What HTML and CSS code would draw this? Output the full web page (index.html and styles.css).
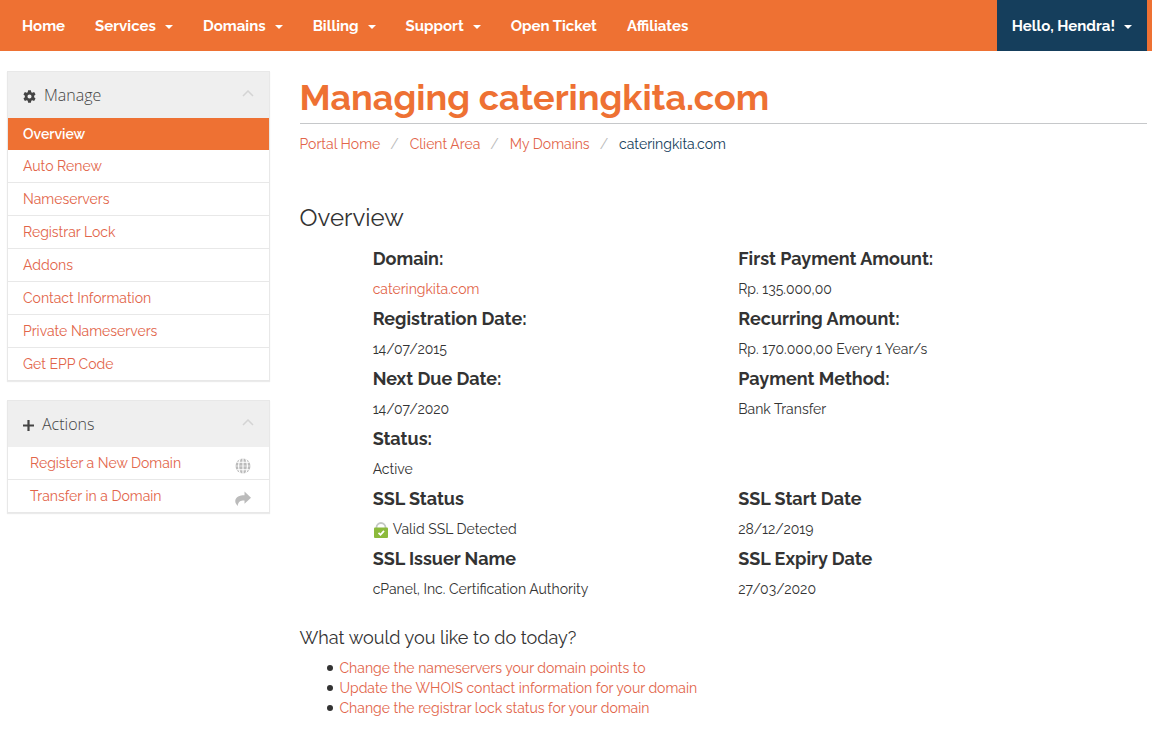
FILE: index.html
```
<!DOCTYPE html>
<html lang="en">
  <head>
    <meta charset="utf-8">
    <meta name="viewport" content="width=device-width, initial-scale=1">
    <title>Managing cateringkita.com</title>
    <link rel="stylesheet" href="styles.css">
  </head>
  <body>

    <!-- main menu -->
    <nav class="navbar">
      <a class="nav-item" href="#">Home</a>
      <button class="nav-item" type="button">Services <span class="caret"></span></button>
      <button class="nav-item" type="button">Domains <span class="caret"></span></button>
      <button class="nav-item" type="button">Billing <span class="caret"></span></button>
      <button class="nav-item" type="button">Support <span class="caret"></span></button>
      <a class="nav-item" href="#">Open Ticket</a>
      <a class="nav-item" href="#">Affiliates</a>
      <button class="nav-item account" type="button">Hello, Hendra! <span class="caret"></span></button>
    </nav>

    <div class="page">

      <!-- sidebar -->
      <aside class="sidebar">
        <section class="panel">
          <h3 class="panel-heading">
            <svg class="heading-icon" viewBox="0 0 14 14"><path fill="currentColor" fill-rule="evenodd" d="M5.500 .3h3l.4 2 1.100.6 2-.7 1.500 2.600-1.500 1.400v1.600l1.500 1.400-1.500 2.600-2-.7-1.100.6-.4 2h-3l-.4-2-1.100-.6-2 .7L.5 9.200 2 7.800V6.200L.5 4.800 2 2.200l2 .7 1.100-.6zM7 4.800a2.200 2.200 0 1 0 0 4.400 2.200 2.200 0 0 0 0-4.400z"/></svg>
            <span>Manage</span>
            <svg class="chevron" viewBox="0 0 12 7"><path fill="none" stroke="currentColor" stroke-width="1.500" d="M1 6l5-5 5 5"/></svg>
          </h3>
          <a class="list-item active" href="#">Overview</a>
          <a class="list-item" href="#">Auto Renew</a>
          <a class="list-item" href="#">Nameservers</a>
          <a class="list-item" href="#">Registrar Lock</a>
          <a class="list-item" href="#">Addons</a>
          <a class="list-item" href="#">Contact Information</a>
          <a class="list-item" href="#">Private Nameservers</a>
          <a class="list-item" href="#">Get EPP Code</a>
        </section>

        <section class="panel">
          <h3 class="panel-heading">
            <svg class="heading-icon plus" viewBox="0 0 12 12"><path fill="currentColor" d="M4.800 0h2.400v4.800H12v2.400H7.200V12H4.800V7.200H0V4.800h4.800z"/></svg>
            <span>Actions</span>
            <svg class="chevron" viewBox="0 0 12 7"><path fill="none" stroke="currentColor" stroke-width="1.500" d="M1 6l5-5 5 5"/></svg>
          </h3>
          <a class="list-item action" href="#">Register a New Domain
            <svg class="action-icon" viewBox="0 0 16 16"><circle cx="8" cy="8" r="7.500" fill="#bbb"/><path fill="none" stroke="#fff" stroke-width="1.100" d="M8 0v16M1.500 4.300h13M1.500 11.700h13M5.300 .5C3.200 5 3.200 11 5.300 15.500M10.700 .5c2.100 4.500 2.100 10.500 0 15"/><path stroke="#fff" stroke-width=".6" d="M0 8h16"/></svg>
          </a>
          <a class="list-item action" href="#">Transfer in a Domain
            <svg class="action-icon" viewBox="0 0 16 16"><path fill="#bbb" d="M9.500 .5L16 6.800l-6.500 6V9.500C6 9.400 3.200 10 2.700 15 1 13 0 11.500.3 9.500.8 6 4.500 4.200 9.500 4.200z"/></svg>
          </a>
        </section>
      </aside>

      <!-- domain details -->
      <main class="content">
        <h1>Managing cateringkita.com</h1>
        <ol class="breadcrumb">
          <li><a href="#">Portal Home</a></li>
          <li><a href="#">Client Area</a></li>
          <li><a href="#">My Domains</a></li>
          <li class="current">cateringkita.com</li>
        </ol>

        <h2>Overview</h2>

        <div class="details">
          <div class="detail">
            <h4>Domain:</h4>
            <a href="#">cateringkita.com</a>
          </div>
          <div class="detail">
            <h4>First Payment Amount:</h4>
            <span>Rp. 135.000,00</span>
          </div>
          <div class="detail">
            <h4>Registration Date:</h4>
            <span>14/07/2015</span>
          </div>
          <div class="detail">
            <h4>Recurring Amount:</h4>
            <span>Rp. 170.000,00 Every 1 Year/s</span>
          </div>
          <div class="detail">
            <h4>Next Due Date:</h4>
            <span>14/07/2020</span>
          </div>
          <div class="detail">
            <h4>Payment Method:</h4>
            <span>Bank Transfer</span>
          </div>
          <div class="detail">
            <h4>Status:</h4>
            <span>Active</span>
          </div>
          <div class="detail first">
            <h4>SSL Status</h4>
            <span class="ssl">
              <svg class="lock" viewBox="0 0 16 16"><path fill="none" stroke="#c4c8c4" stroke-width="1.800" d="M3.500 7V5.500a4.500 4.500 0 0 1 9 0V7"/><rect x="1" y="5.500" width="14" height="10.500" rx="1" fill="#8cba3c"/><path fill="none" stroke="#fff" stroke-width="1.800" d="M5.500 10.800l2 2 3.500-4"/></svg>
              Valid SSL Detected
            </span>
          </div>
          <div class="detail">
            <h4>SSL Start Date</h4>
            <span>28/12/2019</span>
          </div>
          <div class="detail">
            <h4>SSL Issuer Name</h4>
            <span>cPanel, Inc. Certification Authority</span>
          </div>
          <div class="detail">
            <h4>SSL Expiry Date</h4>
            <span>27/03/2020</span>
          </div>
        </div>

        <h3 class="todo-heading">What would you like to do today?</h3>
        <ul class="todo">
          <li><a href="#">Change the nameservers your domain points to</a></li>
          <li><a href="#">Update the WHOIS contact information for your domain</a></li>
          <li><a href="#">Change the registrar lock status for your domain</a></li>
        </ul>
      </main>

    </div>
  </body>
</html>
```

FILE: styles.css
```
* {
  box-sizing: border-box;
}

body {
  margin: 0;
  font-family: Raleway, Lato, sans-serif;
  font-size: 14px;
  line-height: 20px;
  color: #333;
  background-color: #fff;
}

a {
  color: #e2654a;
  text-decoration: none;
}

h1, h2, h3, h4 {
  margin: 0;
}

/* main menu */

.navbar {
  display: flex;
  padding: 0 5px 0 7px;
  background-color: #ee7133;
}

.nav-item {
  display: flex;
  align-items: center;
  gap: 9px;
  height: 51px;
  padding: 0 15px;
  border: 0;
  background: none;
  color: #fff;
  font-family: inherit;
  font-size: 15px;
  font-weight: 700;
  cursor: pointer;
}

.caret {
  margin-top: 2px;
  border-top: 4px solid #fff;
  border-left: 4px solid transparent;
  border-right: 4px solid transparent;
}

.account {
  margin-left: auto;
  background-color: #153e5c;
}

/* page columns */

.page {
  display: grid;
  grid-template-columns: repeat(12, 1fr);
  column-gap: 30px;
  padding: 20px 5px 18px 7px;
}

.sidebar {
  grid-column: span 3;
}

.content {
  grid-column: span 9;
}

/* sidebar panels */

.panel {
  margin-bottom: 19px;
  border: 1px solid #e8e8e8;
  box-shadow: 0 1px 1px rgba(0, 0, 0, .08);
}

.panel-heading {
  display: flex;
  align-items: center;
  gap: 8px;
  height: 46px;
  padding: 0 15px;
  background-color: #efefef;
  color: #444;
  font-family: "Open Sans", sans-serif;
  font-size: 16px;
  font-weight: 300;
}

.heading-icon {
  width: 13px;
  height: 13px;
  margin-top: 2px;
}

.plus {
  width: 11px;
}

.chevron {
  width: 12px;
  height: 7px;
  margin-left: auto;
  margin-bottom: 4px;
  color: #d4d4d4;
}

.list-item {
  display: flex;
  height: 33px;
  padding: 6px 15px;
  border-bottom: 1px solid #e8e8e8;
}

.list-item:last-child {
  height: 32px;
  border-bottom: 0;
}

.active {
  height: 32px;
  border-bottom: 0;
  background-color: #ee7133;
  color: #fff;
  font-weight: 600;
}

.action {
  justify-content: space-between;
  padding-left: 22px;
}

.action-icon {
  width: 16px;
  height: 16px;
  margin-top: 5px;
  margin-right: 3px;
}

/* content */

h1 {
  border-bottom: 1px solid #c6c8ca;
  color: #ee7133;
  font-size: 36px;
  line-height: 52px;
}

.breadcrumb {
  display: flex;
  margin: 0;
  padding: 10px 0;
  list-style: none;
}

.breadcrumb li + li::before {
  content: "/";
  padding: 0 11px 0 10px;
  color: #bbb;
}

.current {
  color: #153e5c;
}

h2 {
  margin-top: 39px;
  font-size: 24px;
  font-weight: 400;
  line-height: 30px;
}

.details {
  display: grid;
  grid-template-columns: repeat(12, 1fr);
  column-gap: 30px;
  margin-top: 6px;
}

.detail {
  grid-column: span 5;
  height: 60px;
}

.detail:nth-child(odd),
.detail.first {
  grid-column: 2 / span 5;
}

.detail.first ~ .detail:nth-child(odd) {
  grid-column: 7 / span 5;
}

.detail.first ~ .detail:nth-child(even) {
  grid-column: 2 / span 5;
}

h4 {
  padding: 10px 0;
  font-size: 18px;
}

.ssl {
  display: flex;
  gap: 4px;
}

.lock {
  width: 16px;
  height: 16px;
  margin-top: 3px;
}

.todo-heading {
  margin-top: 29px;
  font-size: 18px;
  font-weight: 400;
}

.todo {
  margin: 10px 0 0;
  padding-left: 27px;
  list-style: none;
}

.todo li {
  display: flex;
  align-items: center;
  gap: 7px;
}

.todo li::before {
  content: "";
  width: 6px;
  height: 6px;
  border-radius: 50%;
  background-color: #333;
}
```
